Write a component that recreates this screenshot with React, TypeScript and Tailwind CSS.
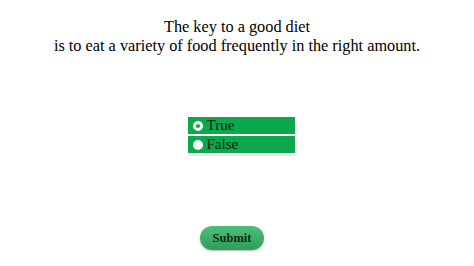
import React, { useState } from 'react';

const options = ['True', 'False'];

export default function App() {
  const [selected, setSelected] = useState(0);

  return (
    <div className="w-[474px] h-[266px] bg-white flex flex-col items-center font-['Liberation_Serif',serif] text-black">
      {/* Question */}
      <div className="mt-[17px] text-center text-[16.3px] leading-[19px]">
        <p>The key to a good diet</p>
        <p>is to eat a variety of food frequently in the right amount.</p>
      </div>

      {/* Answers */}
      <div className="mt-[62px] ml-[8px] w-[107px] border-b border-dotted border-gray-300 pb-[2px] flex flex-col gap-[2px]">
        {options.map((opt, i) => (
          <label
            key={opt}
            className="h-[17px] bg-[#0ba84c] flex items-center pl-[5px] cursor-pointer"
            onClick={() => setSelected(i)}
          >
            <span className="w-[10px] h-[10px] rounded-full bg-white flex items-center justify-center">
              {selected === i && <span className="w-[4px] h-[4px] rounded-full bg-[#0ba84c]" />}
            </span>
            <span className="ml-[4px] text-[15px] leading-none text-[#0a1f10]">{opt}</span>
          </label>
        ))}
      </div>

      {/* Submit */}
      <button className="mt-[70px] mr-[10px] w-[64px] h-[24px] rounded-full bg-gradient-to-b from-[#4cc07a] to-[#2e9d58] shadow-[0_1px_2px_rgba(0,0,0,0.3)] text-[12.5px] font-bold text-[#0b2a14]">
        Submit
      </button>
    </div>
  );
}
